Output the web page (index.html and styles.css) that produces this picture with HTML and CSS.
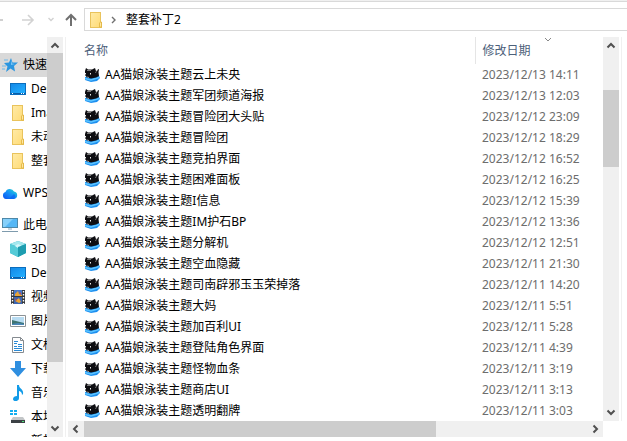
FILE: index.html
```
<!DOCTYPE html>
<html lang="zh-CN">
<head>
    <meta charset="utf-8">
    <meta name="viewport" content="width=device-width, initial-scale=1">
    <title>整套补丁2</title>
    <link rel="stylesheet" href="styles.css">
</head>
<body>
    <!-- 公用图标 -->
    <svg class="defs" width="0" height="0">
        <defs>
            <linearGradient id="blue" x1="0" y1="0" x2="1" y2="1">
                <stop offset="0" stop-color="#1489e8"/>
                <stop offset="1" stop-color="#22b0ff"/>
            </linearGradient>
            <linearGradient id="cloud" x1="0" y1="1" x2="1" y2="0">
                <stop offset="0" stop-color="#0a50f0"/>
                <stop offset="0.5" stop-color="#1590f8"/>
                <stop offset="1" stop-color="#25e0c8"/>
            </linearGradient>
            <linearGradient id="gold" x1="0" y1="0" x2="1" y2="1">
                <stop offset="0" stop-color="#ffeaa6"/>
                <stop offset="1" stop-color="#ffdc78"/>
            </linearGradient>
        </defs>
        <symbol id="folder" viewBox="0 0 16 16">
            <path d="M2 0h11v10h1v6H2z" fill="#e9c35c"/>
            <path d="M3 1h9v14H3z" fill="url(#gold)"/>
            <path d="M12.500 10h1v5h-2v-4z" fill="#ffe7a0" stroke="#dfb23c" stroke-width="0.800"/>
        </symbol>
        <symbol id="desktop" viewBox="0 0 16 16">
            <path d="M0 2h16v12H0z" fill="#0b6dbd"/>
            <path d="M1 3h14v9H1z" fill="url(#blue)"/>
            <path d="M1 12h14v1H1z" fill="#0a5ca6"/>
            <path d="M2 12h1v1H2zM11 12h1v1h-1zM13 12h1v1h-1z" fill="#fff"/>
        </symbol>
        <symbol id="cat" viewBox="0 0 16 16">
            <path d="M1 10l14-1 1 2-3 3-6 1-6-2z" fill="#1c8ff0"/>
            <path d="M1 11.500l6 1.500 8-2.500" stroke="#5cc4ff" stroke-width="1.400" fill="none"/>
            <path d="M1 4l1-3 2 1.500h4L11 1l1 3 1.500-.5L14 2l1 .5L14.500 5l.5 4-3 1.500-5 1L3 10.500 1 8z" fill="#0e0e12"/>
            <path d="M3 3.500h4" stroke="#777" stroke-width="1"/>
            <path d="M1 6h1v1.500H1zM6 6h1v1.500H6z" fill="#eee"/>
            <path d="M11 5.500l2-1" stroke="#777" stroke-width="1"/>
            <path d="M3 10l2 .5" stroke="#999" stroke-width="1"/>
        </symbol>
        <symbol id="up" viewBox="0 0 16 16">
            <path d="M4.500 10.500L8 7l3.500 3.500" fill="none" stroke="#505050" stroke-width="2"/>
        </symbol>
        <symbol id="down" viewBox="0 0 16 16">
            <path d="M4.500 5.500L8 9l3.500-3.500" fill="none" stroke="#505050" stroke-width="2"/>
        </symbol>
        <symbol id="left" viewBox="0 0 16 16">
            <path d="M9.500 4.500L6 8l3.500 3.500" fill="none" stroke="#505050" stroke-width="2"/>
        </symbol>
        <symbol id="right" viewBox="0 0 16 16">
            <path d="M6.500 4.500L10 8l-3.500 3.500" fill="none" stroke="#505050" stroke-width="2"/>
        </symbol>
    </svg>

    <div class="window">
        <!-- 地址栏 -->
        <header class="toolbar">
            <button type="button" class="nav back" aria-label="后退"><svg width="3" height="14" viewBox="0 0 3 14"><path d="M0 7h3" stroke="#d0d0d0" stroke-width="2"/></svg></button>
            <button type="button" class="nav forward" aria-label="前进"><svg width="14" height="14" viewBox="0 0 14 14"><path d="M1 7h11M7 2l5 5-5 5" fill="none" stroke="#d2d2d2" stroke-width="1.600"/></svg></button>
            <button type="button" class="nav recent" aria-label="最近浏览的位置"><svg width="6" height="14" viewBox="0 0 6 14"><path d="M0.500 5L3 7.500 5.500 5" fill="none" stroke="#d2d2d2" stroke-width="1.400"/></svg></button>
            <button type="button" class="nav parent" aria-label="上移"><svg width="12" height="14" viewBox="0 0 12 14"><path d="M6 13V2M1 7l5-5 5 5" fill="none" stroke="#707070" stroke-width="2"/></svg></button>
            <nav class="address">
                <svg class="icon"><use href="#folder"/></svg>
                <svg class="crumb" width="6" height="10" viewBox="0 0 6 10"><path d="M1 2l3 3-3 3" fill="none" stroke="#707070" stroke-width="1.400"/></svg>
                <a href="#">整套补丁2</a>
            </nav>
        </header>

        <div class="main">
            <!-- 导航窗格 -->
            <nav class="sidebar">
                <ul class="group">
                    <li class="root active"><a href="#"><svg class="icon" viewBox="0 0 16 16"><path d="M9 1l1.500 4.500H16l-4 3.500 1 5.500-4.500-3L4 15l1.500-5.500L2 6l5-.5z" fill="#2b96e0"/><path d="M9 3l1 3.500 3 .5-4 1z" fill="#7cc8f8"/><path d="M2 3h4M0 9h4M0 12h3" stroke="#6db8ea"/></svg>快速访问</a></li>
                    <li><a href="#"><svg class="icon"><use href="#desktop"/></svg>Desktop</a></li>
                    <li><a href="#"><svg class="icon"><use href="#folder"/></svg>Images</a></li>
                    <li><a href="#"><svg class="icon"><use href="#folder"/></svg>未动</a></li>
                    <li><a href="#"><svg class="icon"><use href="#folder"/></svg>整套补丁</a></li>
                </ul>
                <ul class="group">
                    <li class="root"><a href="#"><svg class="icon" viewBox="0 0 16 16"><path d="M4 14a3.600 3.600 0 0 1-.5-7A4.600 4.600 0 0 1 12 6.500 3.800 3.800 0 0 1 12 14z" fill="url(#cloud)"/><path d="M7 14l5-5a3 3 0 0 1 0 5z" fill="#0a5cf0" opacity=".6"/></svg>WPS云盘</a></li>
                </ul>
                <ul class="group">
                    <li class="root"><a href="#"><svg class="icon" viewBox="0 0 16 16"><path d="M0 1h16v10H0z" fill="#4e88a8"/><path d="M1 2h14v8H1z" fill="#55b7f5"/><path d="M1 2h10l-8 8H1z" fill="#86d0fa"/><path d="M6 11h4v2H6z" fill="#c4d4df"/><path d="M0 14.500h16" stroke="#7e9bad" stroke-width="1"/></svg>此电脑</a></li>
                    <li><a href="#"><svg class="icon" viewBox="0 0 16 16"><path d="M8 0l8 3v9l-8 4-8-4V3z" fill="#2fb3c4"/><path d="M8 0l8 3-8 3-8-3z" fill="#a5e8ee"/><path d="M0 3l8 3v10l-8-4z" fill="#55cbd7"/><path d="M5 5l3-2 4 2-4 2z" fill="#d7f7fa"/><path d="M8 6v10l8-4V3z" fill="#1e9db0"/></svg>3D 对象</a></li>
                    <li><a href="#"><svg class="icon"><use href="#desktop"/></svg>Desktop</a></li>
                    <li><a href="#"><svg class="icon" viewBox="0 0 16 16"><path d="M1 1h14v14H1z" fill="#36393d"/><path d="M4 1h8v6H4z" fill="#4878c8"/><path d="M4 8h8v7H4z" fill="#3d66b0"/><path d="M5 5l3-3 1 3 3 1v1H5zM5 12l4-3 2 4-2 1z" fill="#e9a436"/><path d="M9 3l2 1v2zM5 9l2 2-1 1z" fill="#d8423d"/><path d="M2.500 2v13M13.500 2v13" stroke="#fff" stroke-width="1.400" stroke-dasharray="1.500 1.500"/></svg>视频</a></li>
                    <li><a href="#"><svg class="icon" viewBox="0 0 16 16"><path d="M.5 2.500h15v11H.5z" fill="#fff" stroke="#8c9296"/><path d="M2 4h12v8H2z" fill="#b8dcf2"/><path d="M2 7l4 1 8 2v2H2z" fill="#3d7371"/><path d="M2 11l6-1 6 1v1H2z" fill="#4a86b8"/></svg>图片</a></li>
                    <li><a href="#"><svg class="icon" viewBox="0 0 16 16"><path d="M2.500.5h8l3 3v12h-11z" fill="#fff" stroke="#858b90"/><path d="M10.500.5v3h3" fill="none" stroke="#858b90"/><path d="M4 4.500h4M4 6.500h3M4 9.500h3M4 11.500h8M4 13.500h8M8 7.500h4M8 9.500h4" stroke="#2b8bd6"/></svg>文档</a></li>
                    <li><a href="#"><svg class="icon" viewBox="0 0 16 16"><path d="M5 0h6v7h5l-8 9-8-9h5z" fill="#2f8fe0"/></svg>下载</a></li>
                    <li><a href="#"><svg class="icon" viewBox="0 0 16 16"><path d="M7 0h2c0 4 5 4 4 9-1 1-1 1-1 1 0-3-2-4-3-4v7c0 4-6 4-6 1 0-2 2-3 4-3z" fill="#129be8"/></svg>音乐</a></li>
                    <li><a href="#"><svg class="icon" viewBox="0 0 16 16"><path d="M0 1h3v2H0zM4 1h3v2H4zM0 4h3v2H0zM4 4h3v2H4z" fill="#12aef0"/><path d="M3 8h10l2 3H1z" fill="#c3c6c8"/><path d="M1 11h14v3H1z" fill="#3c4145"/><path d="M12 12h2v1h-2z" fill="#4ee07a"/></svg>本地磁盘</a></li>
                    <li><a href="#"><svg class="icon" viewBox="0 0 16 16"><path d="M2 10h13v4H2z" fill="#3c4145"/></svg>新加卷</a></li>
                </ul>
            </nav>
            <div class="scroll side-scroll">
                <button type="button" aria-label="向上滚动"><svg><use href="#up"/></svg></button>
                <div class="track"><div class="thumb"></div></div>
                <button type="button" aria-label="向下滚动"><svg><use href="#down"/></svg></button>
            </div>

            <!-- 文件列表 -->
            <section class="content">
                <div class="files">
                    <table>
                        <thead>
                            <tr>
                                <th>名称</th>
                                <th class="date">修改日期<svg class="sort" width="8" height="5" viewBox="0 0 8 5"><path d="M1 1l3 3 3-3" fill="none" stroke="#888"/></svg></th>
                            </tr>
                        </thead>
                        <tbody>
                            <tr><td><svg class="icon"><use href="#cat"/></svg>AA猫娘泳装主题云上未央</td><td class="date">2023/12/13 14:11</td></tr>
                            <tr><td><svg class="icon"><use href="#cat"/></svg>AA猫娘泳装主题军团频道海报</td><td class="date">2023/12/13 12:03</td></tr>
                            <tr><td><svg class="icon"><use href="#cat"/></svg>AA猫娘泳装主题冒险团大头贴</td><td class="date">2023/12/12 23:09</td></tr>
                            <tr><td><svg class="icon"><use href="#cat"/></svg>AA猫娘泳装主题冒险团</td><td class="date">2023/12/12 18:29</td></tr>
                            <tr><td><svg class="icon"><use href="#cat"/></svg>AA猫娘泳装主题竞拍界面</td><td class="date">2023/12/12 16:52</td></tr>
                            <tr><td><svg class="icon"><use href="#cat"/></svg>AA猫娘泳装主题困难面板</td><td class="date">2023/12/12 16:25</td></tr>
                            <tr><td><svg class="icon"><use href="#cat"/></svg>AA猫娘泳装主题I信息</td><td class="date">2023/12/12 15:39</td></tr>
                            <tr><td><svg class="icon"><use href="#cat"/></svg>AA猫娘泳装主题IM护石BP</td><td class="date">2023/12/12 13:36</td></tr>
                            <tr><td><svg class="icon"><use href="#cat"/></svg>AA猫娘泳装主题分解机</td><td class="date">2023/12/12 12:51</td></tr>
                            <tr><td><svg class="icon"><use href="#cat"/></svg>AA猫娘泳装主题空血隐藏</td><td class="date">2023/12/11 21:30</td></tr>
                            <tr><td><svg class="icon"><use href="#cat"/></svg>AA猫娘泳装主题司南辟邪玉玉荣掉落</td><td class="date">2023/12/11 14:20</td></tr>
                            <tr><td><svg class="icon"><use href="#cat"/></svg>AA猫娘泳装主题大妈</td><td class="date">2023/12/11 5:51</td></tr>
                            <tr><td><svg class="icon"><use href="#cat"/></svg>AA猫娘泳装主题加百利UI</td><td class="date">2023/12/11 5:28</td></tr>
                            <tr><td><svg class="icon"><use href="#cat"/></svg>AA猫娘泳装主题登陆角色界面</td><td class="date">2023/12/11 4:39</td></tr>
                            <tr><td><svg class="icon"><use href="#cat"/></svg>AA猫娘泳装主题怪物血条</td><td class="date">2023/12/11 3:19</td></tr>
                            <tr><td><svg class="icon"><use href="#cat"/></svg>AA猫娘泳装主题商店UI</td><td class="date">2023/12/11 3:13</td></tr>
                            <tr><td><svg class="icon"><use href="#cat"/></svg>AA猫娘泳装主题透明翻牌</td><td class="date">2023/12/11 3:03</td></tr>
                        </tbody>
                    </table>
                    <div class="scroll list-scroll">
                        <button type="button" aria-label="向上滚动"><svg><use href="#up"/></svg></button>
                        <div class="track"><div class="thumb"></div></div>
                        <button type="button" aria-label="向下滚动"><svg><use href="#down"/></svg></button>
                    </div>
                </div>
                <div class="scroll bottom-scroll">
                    <button type="button" aria-label="向左滚动"><svg><use href="#left"/></svg></button>
                    <div class="track"><div class="thumb"></div></div>
                    <button type="button" aria-label="向右滚动"><svg><use href="#right"/></svg></button>
                </div>
            </section>
        </div>
    </div>
</body>
</html>
```
FILE: styles.css
```
* {
    margin: 0;
    padding: 0;
    box-sizing: border-box;
}
body {
    font: 12px/20px "Noto Sans", "Noto Sans CJK SC", sans-serif;
    color: #000;
    background: #fff;
    overflow: hidden;
}
a {
    color: inherit;
    text-decoration: none;
}
ul {
    list-style: none;
}
button {
    border: 0;
    background: none;
}
svg {
    display: block;
    flex: none;
}
.defs {
    position: absolute;
}
.icon {
    width: 16px;
    height: 16px;
}
.window {
    display: flex;
    flex-direction: column;
    height: 100vh;
    border-top: 1px solid #f0f0f0;
}
/* 地址栏 */
.toolbar {
    display: flex;
    align-items: center;
    height: 36px;
    border-top: 1px solid #d9d9d9;
}
.forward {
    margin-left: 18px;
}
.recent {
    margin-left: 13px;
}
.parent {
    margin-left: 11px;
}
.address {
    flex: 1;
    display: flex;
    align-items: center;
    height: 23px;
    margin-left: 7px;
    padding-left: 3px;
    border: 1px solid #d9d9d9;
    border-right: 0;
}
.crumb {
    margin: 0 9px 0 7px;
}
.main {
    flex: 1;
    display: flex;
    min-height: 0;
    padding-bottom: 4px;
}
/* 导航窗格 */
.sidebar {
    width: 47px;
    padding-top: 16px;
    overflow: hidden;
}
.group {
    margin-bottom: 8px;
}
.sidebar li {
    height: 24px;
    padding-left: 10px;
    overflow: hidden;
}
.sidebar .root {
    padding-left: 2px;
}
.sidebar .active {
    background: #d9d9d9;
}
.sidebar a {
    display: flex;
    align-items: center;
    gap: 5px;
    height: 24px;
    white-space: nowrap;
}
/* 滚动条 */
.scroll {
    display: flex;
    flex-direction: column;
    flex: none;
    width: 16px;
    background: #f0f0f0;
}
.scroll button,
.scroll svg {
    flex: none;
    width: 16px;
    height: 16px;
}
.track {
    flex: 1;
}
.thumb {
    background: #cdcdcd;
}
.side-scroll .thumb {
    height: 84%;
}
/* 文件列表 */
.content {
    flex: 1;
    display: flex;
    flex-direction: column;
    min-width: 0;
    margin-left: 2px;
    padding-left: 2px;
    border-left: 1px solid #f0f0f0;
}
.files {
    flex: 1;
    display: flex;
    align-items: flex-start;
    min-height: 0;
    margin-right: 5px;
    padding-right: 2px;
    border-right: 1px solid #f0f0f0;
}
table {
    flex: 1;
    table-layout: fixed;
    border-collapse: collapse;
}
th {
    height: 27px;
    padding-left: 16px;
    font-weight: normal;
    text-align: left;
    color: #4c607a;
}
th.date {
    position: relative;
    border-left: 1px solid #e5e5e5;
}
.sort {
    position: absolute;
    top: 0;
    left: 68px;
}
td {
    height: 21px;
    padding-left: 16px;
    white-space: nowrap;
}
td .icon {
    display: inline-block;
    margin-right: 5px;
    vertical-align: middle;
}
.date {
    width: 128px;
    padding-left: 7px;
}
td.date {
    color: #6d6d6d;
}
.list-scroll {
    align-self: stretch;
}
.list-scroll .thumb {
    height: 22%;
    margin-top: 37px;
}
.bottom-scroll {
    flex-direction: row;
    width: auto;
    margin-right: 24px;
}
.bottom-scroll .track {
    display: flex;
}
.bottom-scroll .thumb {
    width: 70%;
}
```
